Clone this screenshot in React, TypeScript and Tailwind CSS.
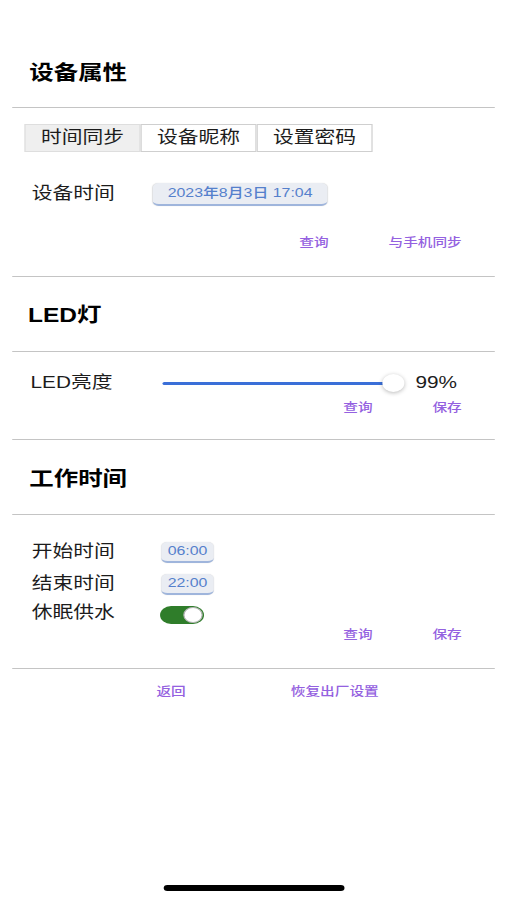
const link = "text-[#9461e0] font-medium";

function Divider({ className = "" }: { className?: string }) {
  return <div className={`mx-[10px] h-px bg-[#c4c4c4] ${className}`} />;
}

function Tab({ label, active = false }: { label: string; active?: boolean }) {
  return (
    <div
      className={
        active
          ? "flex w-[95px] items-center justify-center border border-[#dedede] bg-[#efefef] text-[17px]"
          : "flex w-[95px] items-center justify-center border border-[#cfcfcf] bg-white text-[17px]"
      }
    >
      {label}
    </div>
  );
}

function Chip({ text, className = "" }: { text: string; className?: string }) {
  return (
    <span
      className={`flex items-center justify-center rounded-[5px] border-b-2 border-[#9fb5dc] bg-[#eaedf3] font-medium text-[#5580cc] shadow-[0_0_1px_rgba(0,0,0,0.15)] ${className}`}
    >
      {text}
    </span>
  );
}

function Actions({ left, right, className = "" }: { left: string; right: string; className?: string }) {
  return (
    <div className={`flex h-[20px] items-center justify-end gap-[49px] pr-[37px] text-[12px] ${link} ${className}`}>
      <span>{left}</span>
      <span>{right}</span>
    </div>
  );
}

export default function App() {
  return (
    <div className="min-h-[900px] w-full overflow-hidden bg-white font-['Liberation_Sans','Noto_Sans_CJK_SC',sans-serif] text-[#1c1c1c]">
      {/* screenshot is stretched horizontally, so lay out narrow and scale */}
      <div className="w-[415px] origin-top-left scale-x-[1.2217]">
        {/* 设备属性 */}
        <h1 className="pt-[59px] pl-[24px] text-[20px] leading-[28px] font-bold text-black">设备属性</h1>
        <Divider className="mt-[20px]" />

        <div className="mt-[16px] ml-[20px] flex h-[28px]">
          <Tab label="时间同步" active />
          <Tab label="设备昵称" />
          <Tab label="设置密码" />
        </div>

        <div className="mt-[30px] flex h-[24px] items-center">
          <span className="w-[125px] pl-[26px] text-[17px] leading-[24px]">设备时间</span>
          <Chip text="2023年8月3日 17:04" className="h-[23px] w-[143px] text-[13px]" />
        </div>

        <Actions left="查询" right="与手机同步" className="mt-[27px]" />
        <Divider className="mt-[23px]" />

        {/* LED灯 */}
        <h2 className="mt-[24px] pl-[23px] text-[20px] leading-[28px] font-bold text-black">LED灯</h2>
        <Divider className="mt-[22px]" />

        <div className="mt-[19px] flex h-[24px] items-center">
          <span className="w-[133px] pl-[25px] text-[17px] leading-[24px]">LED亮度</span>
          <div className="h-[3px] w-[189px] rounded-full bg-[#3a6fd8]" />
          <div className="-ml-[9px] h-[18px] w-[18px] rounded-full bg-white shadow-[0_1px_4px_rgba(0,0,0,0.28)]" />
          <span className="ml-[9px] text-[17px] leading-[24px]">99%</span>
        </div>

        <Actions left="查询" right="保存" className="mt-[3px]" />
        <Divider className="mt-[21px]" />

        {/* 工作时间 */}
        <h2 className="mt-[25px] pl-[24px] text-[20px] leading-[28px] font-bold text-black">工作时间</h2>
        <Divider className="mt-[21px]" />

        <div className="mt-[26px] flex h-[22px] items-center">
          <span className="w-[132px] pl-[26px] text-[17px] leading-[22px]">开始时间</span>
          <Chip text="06:00" className="h-[21px] w-[43px] text-[13px]" />
        </div>
        <div className="mt-[10px] flex h-[22px] items-center">
          <span className="w-[132px] pl-[26px] text-[17px] leading-[22px]">结束时间</span>
          <Chip text="22:00" className="h-[21px] w-[43px] text-[13px]" />
        </div>
        <div className="mt-[7px] flex h-[22px] items-center">
          <span className="w-[131px] pl-[26px] text-[17px] leading-[22px]">休眠供水</span>
          <div className="mt-[3px] flex h-[18px] w-[36px] items-center justify-end rounded-full bg-[#2f7d2a] pr-px">
            <div className="h-[16px] w-[16px] rounded-full border border-[#b5b5b5] bg-white" />
          </div>
        </div>

        <Actions left="查询" right="保存" className="mt-px" />
        <Divider className="mt-[23px]" />

        <div className={`mt-[13px] flex h-[20px] items-center gap-[86px] pl-[128px] text-[12px] ${link}`}>
          <span>返回</span>
          <span>恢复出厂设置</span>
        </div>

        {/* home indicator */}
        <div className="mt-[183px] ml-[134px] h-[6px] w-[148px] rounded-full bg-black" />
      </div>
    </div>
  );
}
